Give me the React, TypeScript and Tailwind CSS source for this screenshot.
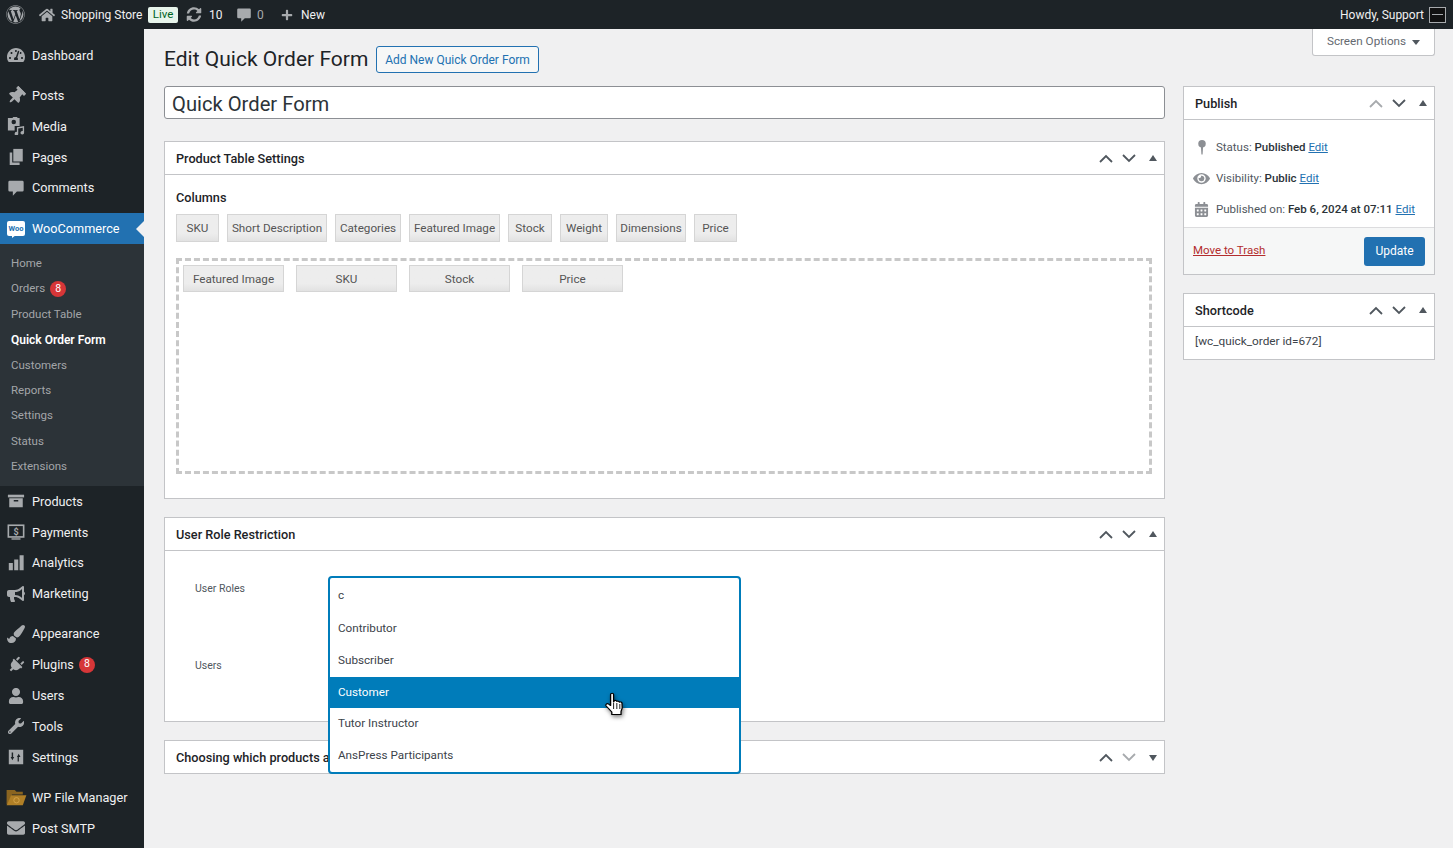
// Edit Quick Order Form - wp-admin screen
import type { ReactNode } from "react";
import {
  FaWordpress,
  FaHome,
  FaSyncAlt,
  FaPlus,
  FaTachometerAlt,
  FaThumbtack,
  FaBullhorn,
  FaPaintBrush,
  FaPlug,
  FaUser,
  FaWrench,
  FaEnvelope,
  FaEye,
  FaCalendarAlt,
} from "react-icons/fa";

const ic = "w-[18px] h-[18px] fill-[#a7aaad]";

const CommentIcon = ({ className }: { className: string }) => (
  <svg viewBox="0 0 20 20" className={className}>
    <path d="M3 2h14a1.500 1.500 0 0 1 1.500 1.500v9A1.500 1.500 0 0 1 17 14h-6l-4.500 4.500V14H3a1.500 1.500 0 0 1-1.500-1.500v-9A1.500 1.500 0 0 1 3 2z" />
  </svg>
);

const MediaIcon = () => (
  <svg viewBox="0 0 20 20" className={ic}>
    <path fillRule="evenodd" d="M1 1h5l1-1h4l1 1h2v9H8.500v5H1zM7.500 3a2.500 2.500 0 1 0 0 5 2.500 2.500 0 0 0 0-5z" />
    <path d="M11 11.500l8-1.500v7.500a2 2 0 1 1-1.500-1.900V12l-5 .9v5.600a2 2 0 1 1-1.500-1.900z" />
  </svg>
);

const PagesIcon = () => (
  <svg viewBox="0 0 20 20" className={ic}>
    <path d="M7 1h10.500v14H7z" />
    <path d="M3 5h2.800v11.200H14V19H3z" />
  </svg>
);

const ProductsIcon = () => (
  <svg viewBox="0 0 20 20" className={ic}>
    <path d="M1 3h18v3H1z" />
    <path fillRule="evenodd" d="M2.500 7h15v10h-15zM7.500 9v1.500h5V9z" />
  </svg>
);

const PaymentsIcon = () => (
  <svg viewBox="0 0 20 20" className="w-[18px] h-[18px]">
    <rect x="1.500" y="2.500" width="17" height="13" fill="none" stroke="#a7aaad" strokeWidth="1.800" />
    <path d="M5 17h10v1.500H5z" fill="#a7aaad" />
    <text x="10" y="13" fontSize="10" fontWeight="700" textAnchor="middle" fill="#a7aaad">$</text>
  </svg>
);

const AnalyticsIcon = () => (
  <svg viewBox="0 0 20 20" className={ic}>
    <path d="M2 10h4.500v8H2zM8 6h4.500v12H8zM14 1.500h4.500V18H14z" />
  </svg>
);

const SettingsIcon = () => (
  <svg viewBox="0 0 20 20" className={ic}>
    <path
      fillRule="evenodd"
      d="M2 2h16v16H2zM5.200 5v5H4l2 3.500L8 10H6.800V5zM13.200 15v-5H15l-2-3.500L11 10h.8v5z"
    />
  </svg>
);

const FolderIcon = () => (
  <svg viewBox="0 0 22 20" className="w-[21px] h-[18px]">
    <path d="M0 1h9l2 2h7v3H6L1 17H0z" fill="#8a6420" />
    <path d="M5 7h17l-4 11H0z" fill="#b07f26" />
    <circle cx="11" cy="12.500" r="3" fill="none" stroke="#d6a54c" strokeWidth="1" />
  </svg>
);

const WooIcon = () => (
  <div className="relative flex h-[15px] w-[18px] items-center justify-center rounded-[2px] bg-white">
    <span className="text-[7.500px] font-bold leading-none text-[#2271b1]">Woo</span>
    <span className="absolute -bottom-[2px] left-[5px] h-0 w-0 border-r-[4px] border-t-[3px] border-r-transparent border-t-white" />
  </div>
);

const Badge = ({ n }: { n: number }) => (
  <span className="ml-[5px] flex h-[16px] w-[16px] items-center justify-center rounded-full bg-[#d63638] text-[10.500px] leading-none text-white">
    {n}
  </span>
);

const MenuItem = ({
  icon,
  label,
  badge,
}: {
  icon: ReactNode;
  label: string;
  badge?: number;
}) => (
  <div className="flex h-[30.800px] items-center text-[#f0f0f1]">
    <span className="flex w-[32px] shrink-0 items-center justify-center">{icon}</span>
    <span>{label}</span>
    {badge ? <Badge n={badge} /> : null}
  </div>
);

const Sep = ({ h }: { h: string }) => <div className={h} />;

const subItems = ["Home", "Orders", "Product Table", "Quick Order Form", "Customers", "Reports", "Settings", "Status", "Extensions"];

const Sidebar = () => (
  <aside className="w-[144px] shrink-0 bg-[#1d2327] pt-[11px] text-[12.700px]">
    <MenuItem icon={<FaTachometerAlt className={ic} />} label="Dashboard" />
    <Sep h="h-[9.400px]" />
    <MenuItem icon={<FaThumbtack className={`${ic} rotate-45`} />} label="Posts" />
    <MenuItem icon={<MediaIcon />} label="Media" />
    <MenuItem icon={<PagesIcon />} label="Pages" />
    <MenuItem icon={<CommentIcon className={ic} />} label="Comments" />
    <Sep h="h-[9.600px]" />
    <div className="relative flex h-[31px] items-center bg-[#2271b1] text-white">
      <span className="flex w-[32px] shrink-0 items-center justify-center">
        <WooIcon />
      </span>
      <span>WooCommerce</span>
      <span className="absolute right-0 top-[8px] h-0 w-0 border-y-[8px] border-r-[8px] border-y-transparent border-r-[#f0f0f1]" />
    </div>
    <div className="h-[242px] bg-[#2c3338] pb-[5px] pt-[7px] text-[11.500px]">
      {subItems.map((s) => (
        <div
          key={s}
          className={`flex h-[25.400px] items-center pl-[11px] ${s === "Quick Order Form" ? "text-[12px] font-semibold text-white" : "text-[#c3c4c7]/80"}`}
        >
          {s}
          {s === "Orders" ? <Badge n={8} /> : null}
        </div>
      ))}
    </div>
    <MenuItem icon={<ProductsIcon />} label="Products" />
    <MenuItem icon={<PaymentsIcon />} label="Payments" />
    <MenuItem icon={<AnalyticsIcon />} label="Analytics" />
    <MenuItem icon={<FaBullhorn className={ic} />} label="Marketing" />
    <Sep h="h-[9.400px]" />
    <MenuItem icon={<FaPaintBrush className={ic} />} label="Appearance" />
    <MenuItem icon={<FaPlug className={`${ic} rotate-45 scale-90`} />} label="Plugins" badge={8} />
    <MenuItem icon={<FaUser className={`${ic} scale-90`} />} label="Users" />
    <MenuItem icon={<FaWrench className={`${ic} scale-90`} />} label="Tools" />
    <MenuItem icon={<SettingsIcon />} label="Settings" />
    <Sep h="h-[9.600px]" />
    <MenuItem icon={<FolderIcon />} label="WP File Manager" />
    <MenuItem icon={<FaEnvelope className={ic} />} label="Post SMTP" />
  </aside>
);

const AdminBar = () => (
  <header className="flex h-[29px] shrink-0 items-center bg-[#1d2327] text-[12px] text-[#f0f0f1]">
    <FaWordpress className="ml-[6px] h-[19px] w-[19px] fill-[#a7aaad]" />
    <FaHome className="ml-[14px] h-[16px] w-[16px] fill-[#a7aaad]" />
    <span className="ml-[6px] w-[80px] whitespace-nowrap">Shopping Store</span>
    <span className="ml-[7px] flex h-[16px] w-[30px] items-center justify-center rounded-[2px] bg-[#e8f5ec] text-[11.500px] text-[#00631f]">
      Live
    </span>
    <FaSyncAlt className="ml-[8px] h-[15px] w-[16px] fill-[#a7aaad]" />
    <span className="ml-[7px] w-[12px]">10</span>
    <CommentIcon className="ml-[15px] h-[16px] w-[16px] fill-[#a7aaad]" />
    <span className="ml-[5px] w-[8px] text-[#a7aaad]">0</span>
    <FaPlus className="ml-[16px] h-[12px] w-[12px] fill-[#a7aaad]" />
    <span className="ml-[8px]">New</span>
    <span className="ml-auto">Howdy, Support</span>
    <span className="ml-[5px] mr-[7px] flex h-[16px] w-[17px] items-center justify-center border border-[#a7aaad] bg-[#111]">
      <span className="h-[1px] w-[11px] bg-[#a7aaad]" />
    </span>
  </header>
);

const HandleIcons = ({ dimUp, dimDown, closed }: { dimUp?: boolean; dimDown?: boolean; closed?: boolean }) => (
  <div className="flex items-center">
    <svg viewBox="0 0 14 9" className={`h-[9px] w-[14px] fill-none stroke-[1.800] ${dimUp ? "stroke-[#a7aaad]" : "stroke-[#50575e]"}`}>
      <path d="M1 8l6-6 6 6" />
    </svg>
    <svg viewBox="0 0 14 9" className={`ml-[9px] h-[9px] w-[14px] fill-none stroke-[1.800] ${dimDown ? "stroke-[#a7aaad]" : "stroke-[#50575e]"}`}>
      <path d="M1 1l6 6 6-6" />
    </svg>
    <svg viewBox="0 0 8 6" className={`ml-[13px] mr-[7px] h-[6px] w-[8px] fill-[#50575e] ${closed ? "rotate-180" : ""}`}>
      <path d="M4 0l4 6H0z" />
    </svg>
  </div>
);

const Box = ({
  title,
  children,
  dimUp,
  dimDown,
  closed,
  className,
}: {
  title: string;
  children?: ReactNode;
  dimUp?: boolean;
  dimDown?: boolean;
  closed?: boolean;
  className?: string;
}) => (
  <section className={`border border-[#c3c4c7] bg-white ${className ?? ""}`}>
    <div className={`flex h-[33px] items-center justify-between pl-[11px] ${closed ? "" : "border-b border-[#c3c4c7]"}`}>
      <h2 className="whitespace-nowrap pt-[1px] text-[12.700px] font-medium text-[#1d2327]">{title}</h2>
      <HandleIcons dimUp={dimUp} dimDown={dimDown} closed={closed} />
    </div>
    {children}
  </section>
);

const chips = [
  { label: "SKU", w: "w-[43px]" },
  { label: "Short Description", w: "w-[100px]" },
  { label: "Categories", w: "w-[66px]" },
  { label: "Featured Image", w: "w-[91px]" },
  { label: "Stock", w: "w-[44px]" },
  { label: "Weight", w: "w-[48px]" },
  { label: "Dimensions", w: "w-[70px]" },
  { label: "Price", w: "w-[43px]" },
];

const chipStyle =
  "flex items-center justify-center whitespace-nowrap border border-[#d5d5d5] bg-gradient-to-b from-[#ededed] from-70% to-[#e2e2e2] pt-[1px] text-[11.700px] text-[#555]";

const roles = ["Contributor", "Subscriber", "Customer", "Tutor Instructor", "AnsPress Participants"];

const Dropdown = () => (
  <div className="absolute left-[164px] top-[59px] z-10 h-[198px] w-[413px] overflow-hidden rounded-[4px] border-2 border-[#007cba] bg-white text-[11.700px] text-[#3c434a]">
    <div className="flex h-[35px] items-center pl-[8px]">c</div>
    {roles.map((r) => (
      <div
        key={r}
        className={`flex items-center pl-[8px] ${r === "Customer" ? "h-[31px] bg-[#007cba] text-white" : "h-[32px]"}`}
      >
        {r}
      </div>
    ))}
  </div>
);

const Cursor = () => (
  <svg
    viewBox="0 0 20 26"
    preserveAspectRatio="none"
    className="absolute left-[440px] top-[175px] z-20 h-[26px] w-[24px] drop-shadow-[1px_2px_2px_rgba(0,0,0,0.5)]"
  >
    <path
      d="M5.500 2.500c0-1.600 2.500-1.600 2.500 0V10l.5-1.200c.8-.8 2-.3 2.200.6.7-.6 1.900-.2 2.100.8.800-.5 2-.1 2.200 1 .4 2.700.3 5.800-.8 8.300v3H6.500v-2.500L1.800 14c-1-1.500.7-3 2.100-1.900l1.600 1.400z"
      fill="#fff"
      stroke="#000"
      strokeWidth="1.100"
      strokeLinejoin="round"
    />
    <path d="M8 11v6M10.700 11v6M13.200 12v5" stroke="#000" strokeWidth="0.800" fill="none" />
  </svg>
);

const MainColumn = () => (
  <div className="min-w-0 flex-1">
    <div className="flex h-[33px] items-center rounded-[3px] border border-[#8c8f94] bg-white pl-[7px] pt-[3px] text-[20.200px] text-[#2c3338]">
      Quick Order Form
    </div>
    <Box title="Product Table Settings" className="mt-[22px] h-[358px]" dimUp={false}>
      <div className="px-[11px] pt-[13px]">
        <div className="text-[12.700px] font-medium leading-[20px] text-[#1d2327]">Columns</div>
        <div className="mt-[6px] flex gap-[8px]">
          {chips.map((c) => (
            <div key={c.label} className={`h-[28px] ${c.w} ${chipStyle}`}>
              {c.label}
            </div>
          ))}
        </div>
        <div className="mt-[16px] flex h-[216px] w-[976px] items-start gap-[12px] border-[3px] border-dashed border-[#c8c8c8] px-[4px] pt-[4px]">
          {["Featured Image", "SKU", "Stock", "Price"].map((c) => (
            <div key={c} className={`h-[27px] w-[101px] pt-[3px] ${chipStyle}`}>
              {c}
            </div>
          ))}
        </div>
      </div>
    </Box>
    <div className="relative mt-[18px]">
      <Box title="User Role Restriction" className="h-[205px]">
        <div className="relative text-[10.500px] text-[#50575e]">
          <div className="pl-[30px] pt-[30px]">User Roles</div>
          <div className="pl-[30px] pt-[61px]">Users</div>
        </div>
      </Box>
      {/* the rest of this title sits behind the open dropdown */}
      <Box title="Choosing which products a" className="mt-[18px] h-[34px]" dimDown closed />
      <Dropdown />
      <Cursor />
    </div>
  </div>
);

const PublishRow = ({ icon, label, value }: { icon: ReactNode; label: string; value: string }) => (
  <div className="flex h-[31px] items-center whitespace-nowrap">
    <span className="flex w-[32px] shrink-0 items-center justify-center pl-[3px]">{icon}</span>
    <span>
      {label} <b className="font-medium text-[#2c3338]">{value}</b>{" "}
      <a className="text-[#2271b1] underline">Edit</a>
    </span>
  </div>
);

const SideColumn = () => (
  <div className="w-[252px] shrink-0">
    <Box title="Publish" className="h-[189px]" dimUp>
      <div className="h-[107px] pt-[12px] text-[11.500px] text-[#50575e]">
        <PublishRow
          icon={
            <svg viewBox="0 0 10 16" className="h-[15px] w-[10px] fill-[#8c8f94]">
              <circle cx="5" cy="4" r="4" />
              <path d="M3.800 7h2.400l-.6 8.500h-1.200z" />
            </svg>
          }
          label="Status:"
          value="Published"
        />
        <PublishRow icon={<FaEye className="h-[15px] w-[17px] fill-[#8c8f94]" />} label="Visibility:" value="Public" />
        <PublishRow icon={<FaCalendarAlt className="h-[15px] w-[15px] fill-[#8c8f94]" />} label="Published on:" value="Feb 6, 2024 at 07:11" />
      </div>
      <div className="flex h-[47px] items-center justify-between border-t border-[#dcdcde] bg-[#f6f7f7] pl-[9px] pr-[9px]">
        <a className="text-[11.500px] text-[#b32d2e] underline">Move to Trash</a>
        <button className="flex h-[29px] w-[61px] items-center justify-center rounded-[3px] bg-[#2271b1] text-[12px] text-white">
          Update
        </button>
      </div>
    </Box>
    <Box title="Shortcode" className="mt-[18px] h-[67px]">
      <div className="pl-[11px] pt-[6px] text-[11.800px] text-[#3c434a]">[wc_quick_order id=672]</div>
    </Box>
  </div>
);

export default function App() {
  return (
    <div className="flex h-screen flex-col overflow-hidden bg-[#f0f0f1] font-['Roboto',sans-serif]">
      <AdminBar />
      <div className="flex min-h-0 flex-1">
        <Sidebar />
        <main className="relative min-w-0 flex-1 pl-[20px] pr-[18px]">
          <div className="absolute right-[18px] top-0 flex h-[27px] w-[123px] items-center justify-center rounded-b-[3px] border border-t-0 border-[#c3c4c7] bg-white text-[11.700px] text-[#646970]">
            Screen Options
            <svg viewBox="0 0 8 5" className="ml-[6px] h-[5px] w-[8px] fill-[#50575e]">
              <path d="M0 0h8L4 5z" />
            </svg>
          </div>
          <div className="flex h-[57px] items-center pt-[4px]">
            <h1 className="w-[204px] whitespace-nowrap pt-[1px] text-[21px] text-[#1d2327]">Edit Quick Order Form</h1>
            <button className="ml-[8px] flex h-[27px] w-[163px] items-center justify-center whitespace-nowrap rounded-[3px] border border-[#2271b1] bg-[#f6f7f7] text-[12px] text-[#2271b1]">
              Add New Quick Order Form
            </button>
          </div>
          <div className="flex gap-[18px]">
            <MainColumn />
            <SideColumn />
          </div>
        </main>
      </div>
    </div>
  );
}
